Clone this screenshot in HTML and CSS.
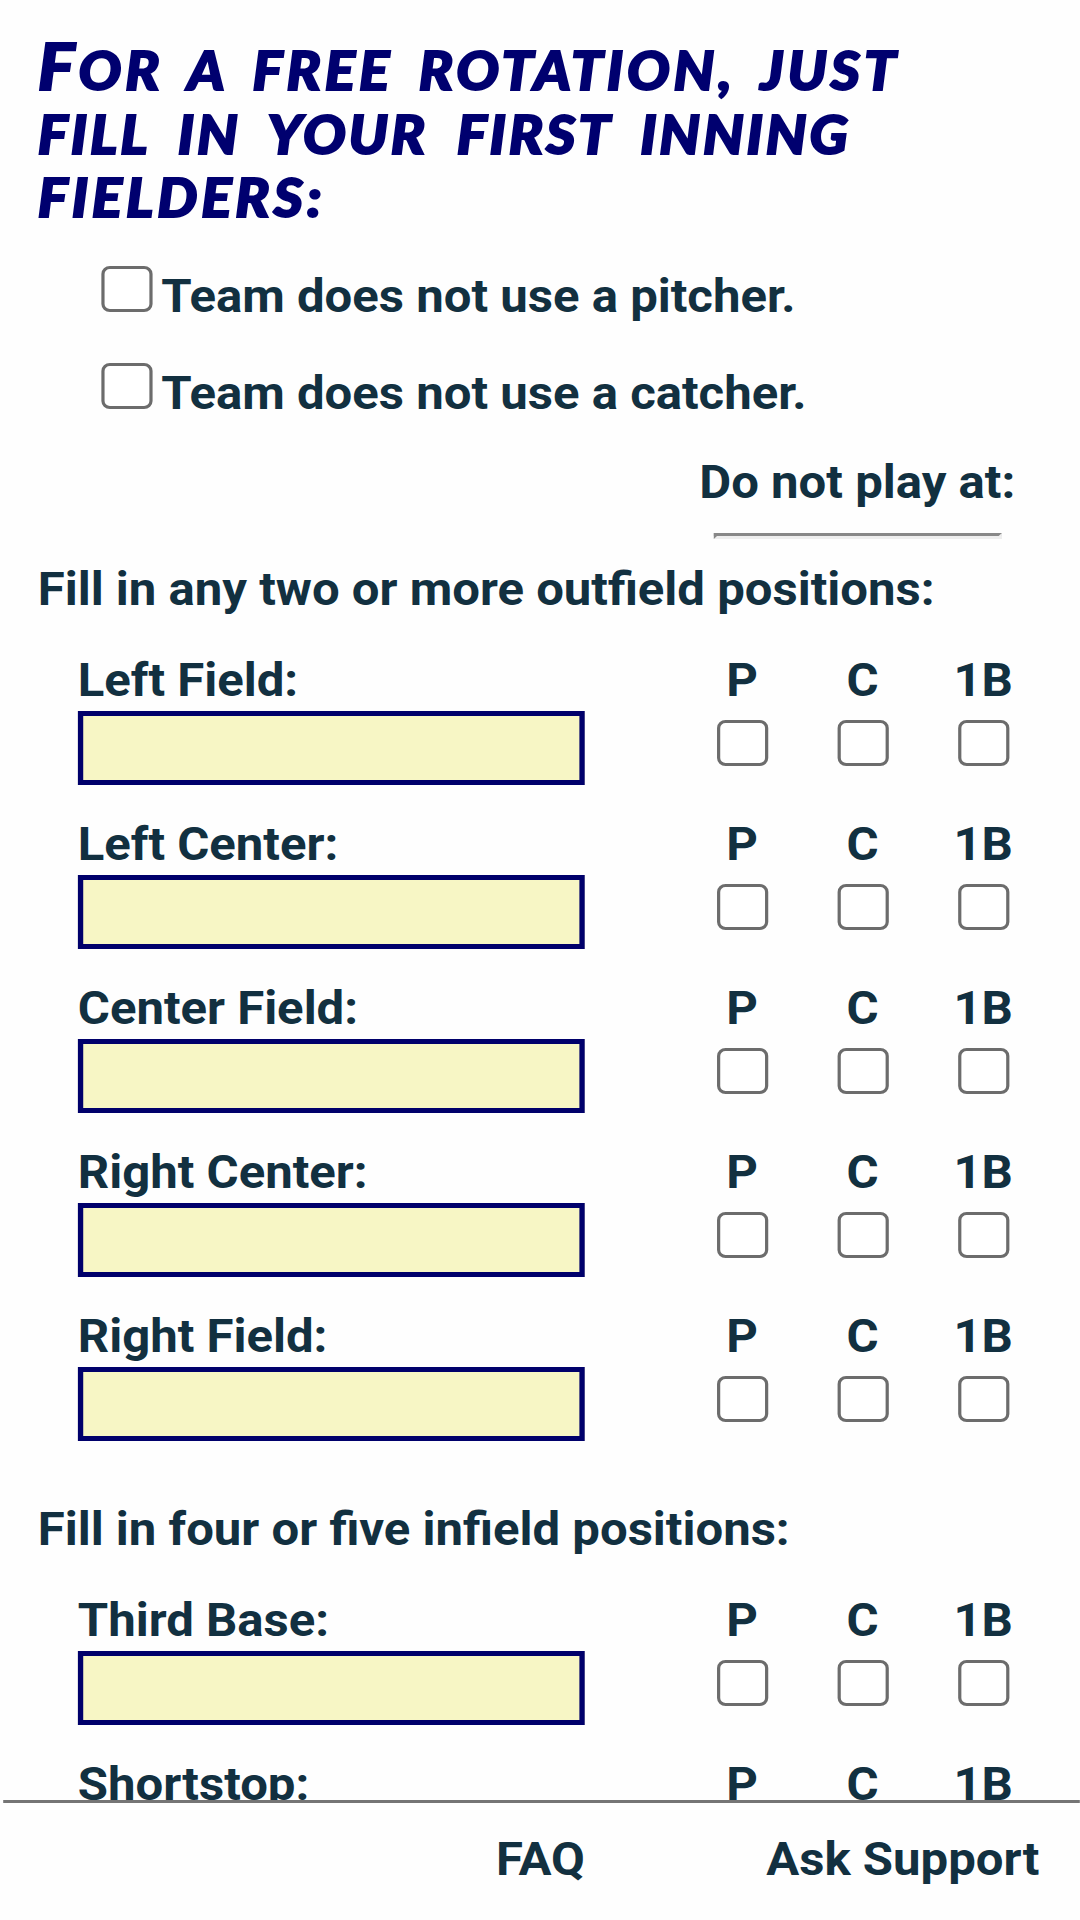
FILE: index.html
```
<!DOCTYPE html>
<html>
<head>
<meta charset="utf-8">
<title>Free Rotation</title>
<link rel="stylesheet" href="styles.css">
</head>
<body>
<div class="page">
<form class="content">
<h1 class="title">
<span class="line line1">For a free rotation, just</span>
<span class="line line2">fill in your first inning</span>
<span class="line line3">fielders:</span>
</h1>

<label class="option"><input type="checkbox" class="check"><span>Team does not use a pitcher.</span></label>
<label class="option"><input type="checkbox" class="check"><span>Team does not use a catcher.</span></label>

<div class="noplay">
<span>Do not play at:</span>
<hr class="rule">
</div>

<h2 class="section">Fill in any two or more outfield positions:</h2>
<div class="row">
<label class="player">Left Field:<input type="text" class="name"></label>
<label class="pos">P<input type="checkbox" class="check"></label>
<label class="pos">C<input type="checkbox" class="check"></label>
<label class="pos">1B<input type="checkbox" class="check"></label>
</div>
<div class="row">
<label class="player">Left Center:<input type="text" class="name"></label>
<label class="pos">P<input type="checkbox" class="check"></label>
<label class="pos">C<input type="checkbox" class="check"></label>
<label class="pos">1B<input type="checkbox" class="check"></label>
</div>
<div class="row">
<label class="player">Center Field:<input type="text" class="name"></label>
<label class="pos">P<input type="checkbox" class="check"></label>
<label class="pos">C<input type="checkbox" class="check"></label>
<label class="pos">1B<input type="checkbox" class="check"></label>
</div>
<div class="row">
<label class="player">Right Center:<input type="text" class="name"></label>
<label class="pos">P<input type="checkbox" class="check"></label>
<label class="pos">C<input type="checkbox" class="check"></label>
<label class="pos">1B<input type="checkbox" class="check"></label>
</div>
<div class="row">
<label class="player">Right Field:<input type="text" class="name"></label>
<label class="pos">P<input type="checkbox" class="check"></label>
<label class="pos">C<input type="checkbox" class="check"></label>
<label class="pos">1B<input type="checkbox" class="check"></label>
</div>

<h2 class="section infield">Fill in four or five infield positions:</h2>
<div class="row">
<label class="player">Third Base:<input type="text" class="name"></label>
<label class="pos">P<input type="checkbox" class="check"></label>
<label class="pos">C<input type="checkbox" class="check"></label>
<label class="pos">1B<input type="checkbox" class="check"></label>
</div>
<div class="row">
<label class="player">Shortstop:<input type="text" class="name"></label>
<label class="pos">P<input type="checkbox" class="check"></label>
<label class="pos">C<input type="checkbox" class="check"></label>
<label class="pos">1B<input type="checkbox" class="check"></label>
</div>
</form>

<div class="footer">
<a class="link">FAQ</a>
<a class="link">Ask Support</a>
</div>
</div>
</body>
</html>
```

FILE: styles.css
```
* {
  box-sizing: border-box;
}

body {
  margin: 0;
  background-color: #fefefe;
  color: #123040;
  font-family: Roboto, sans-serif;
  font-size: 46px;
  font-weight: bold;
  line-height: 54px;
  overflow: hidden;
}

/* everything is drawn a little wider than it is tall */
.page {
  display: flex;
  flex-direction: column;
  width: 1012.2px;
  height: 1920px;
  transform: scaleX(1.067);
  transform-origin: 0 0;
}

.content {
  flex: 1;
  min-height: 0;
  overflow: hidden;
  padding: 38px 0 0 35.4px;
}

.title {
  height: 210px;
  margin: 0;
  color: #00006f;
  font-family: "Permanent Marker", Lato, sans-serif;
  font-size: 53px;
  font-style: italic;
  font-weight: 900;
  line-height: 63.5px;
  text-transform: uppercase;
  white-space: nowrap;
  -webkit-text-stroke: 2px #00006f;
}

.line {
  display: block;
}

.line1 {
  letter-spacing: 3.7px;
  word-spacing: 9px;
}

.line1::first-letter {
  font-size: 65px;
  line-height: 50px;
}

.line2 {
  letter-spacing: 2.7px;
  word-spacing: 13px;
}

.line3 {
  letter-spacing: 3.6px;
}

.option {
  display: flex;
  height: 97px;
  padding: 18px 0 0 59.4px;
}

.option span {
  margin: 3px 0 0 8.6px;
}

.check {
  appearance: none;
  display: block;
  flex: none;
  width: 47.8px;
  height: 46px;
  margin: 0;
  border: 3px solid #6c6c6c;
  border-radius: 8px;
  background-color: #ffffff;
}

.noplay {
  width: 294px;
  height: 120px;
  margin-left: 620px;
  padding-top: 13px;
  white-space: nowrap;
}

.rule {
  width: 270px;
  margin: 24px 0 0 13.5px;
  border: 3px solid #eeeeee;
  border-top-color: #888888;
  border-left-color: #888888;
}

.section {
  height: 91px;
  margin: 0;
  font-size: 46px;
  line-height: 54px;
}

.row {
  display: flex;
  height: 164.1px;
  padding-left: 37.5px;
}

.player {
  width: 566px;
}

.name {
  display: block;
  width: 475.5px;
  height: 74px;
  margin-top: 4px;
  border: 5px solid #00006b;
  border-radius: 0;
  background-color: #f7f6c5;
}

.pos {
  display: flex;
  flex-direction: column;
  align-items: center;
  width: 113px;
}

.pos .check {
  margin: 13px 0 0 2px;
}

.infield {
  margin-top: 28.5px;
}

.footer {
  display: flex;
  flex: none;
  justify-content: flex-end;
  gap: 170px;
  height: 120px;
  margin-left: 3px;
  padding: 29px 38.2px 0 0;
  border-top: 3px solid #757575;
}
```
